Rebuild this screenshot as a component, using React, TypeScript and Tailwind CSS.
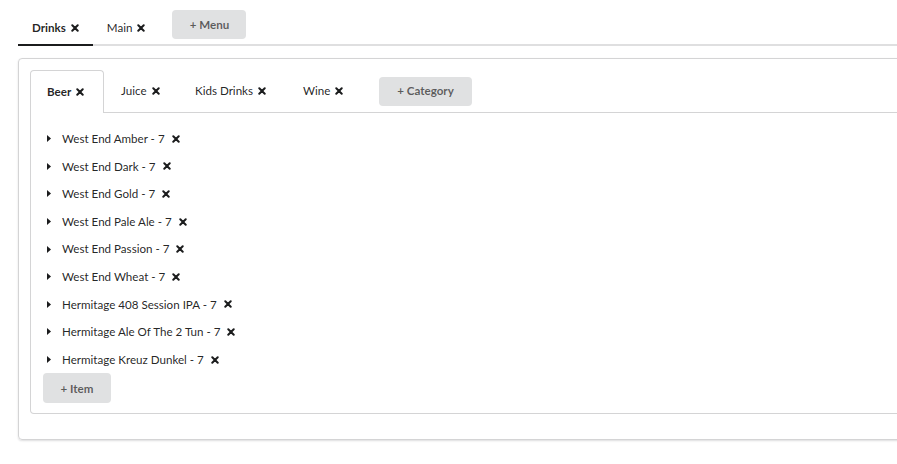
import React from "react";

function XIcon({ className = "" }: { className?: string }) {
  return (
    <svg viewBox="0 0 10 10" className={`w-[8px] h-[8px] ${className}`} aria-hidden>
      <path d="M1.6 1.6 L8.4 8.4 M8.4 1.6 L1.6 8.4" stroke="#1b1c1d" strokeWidth="2.5" strokeLinecap="round" fill="none" />
    </svg>
  );
}

function Caret() {
  return (
    <svg viewBox="0 0 4 7" className="w-[4px] h-[7px]" aria-hidden>
      <polygon points="0,0 4,3.5 0,7" fill="#1b1c1d" />
    </svg>
  );
}

const items = [
  "West End Amber - 7",
  "West End Dark - 7",
  "West End Gold - 7",
  "West End Pale Ale - 7",
  "West End Passion - 7",
  "West End Wheat - 7",
  "Hermitage 408 Session IPA - 7",
  "Hermitage Ale Of The 2 Tun - 7",
  "Hermitage Kreuz Dunkel - 7",
];

export default function App() {
  return (
    <div
      className="w-[897px] h-[464px] overflow-hidden bg-white text-[11.6px] text-[rgba(0,0,0,0.87)]"
      style={{ fontFamily: "Lato, 'Open Sans', sans-serif" }}
    >
      <div className="w-[1000px] ml-[18px]">
        {/* top menu */}
        <div className="mt-[10px] h-[36px] flex border-b-2 border-[#dfdfe0]">
          <div className="flex items-center pt-[2px] px-[14px] border-b-2 border-[#1b1c1d] -mb-[2px] font-bold leading-none">
            <span>Drinks</span>
            <XIcon className="ml-[5px]" />
          </div>
          <div className="flex items-center pt-[2px] px-[14px] leading-none">
            <span>Main</span>
            <XIcon className="ml-[5px]" />
          </div>
          <button className="self-start ml-[13px] h-[29px] w-[74px] rounded-[4px] bg-[#e0e1e2] text-[rgba(0,0,0,0.6)] font-bold leading-none">
            + Menu
          </button>
        </div>

        {/* outer segment */}
        <div className="mt-[12px] border border-[#d4d4d5] rounded-[4px] shadow-[0_1px_2px_0_rgba(34,36,38,0.15)] pt-[11px] px-[11px] pb-[25px]">
          {/* tabular menu */}
          <div className="h-[43px] flex items-center border-b border-[#d4d4d5]">
            <div className="self-stretch flex items-center pl-[16px] bg-white border border-[#d4d4d5] border-b-0 rounded-t-[4px] -mb-[1px] font-bold leading-none w-[74px]">
              <span>Beer</span>
              <XIcon className="ml-[5px]" />
            </div>
            <div className="self-stretch flex items-center pl-[17px] w-[74px] leading-none">
              <span>Juice</span>
              <XIcon className="ml-[5px]" />
            </div>
            <div className="self-stretch flex items-center pl-[17px] w-[108px] leading-none">
              <span>Kids Drinks</span>
              <XIcon className="ml-[5px]" />
            </div>
            <div className="self-stretch flex items-center pl-[17px] w-[75px] leading-none">
              <span>Wine</span>
              <XIcon className="ml-[5px]" />
            </div>
            <button className="ml-[18px] h-[29px] w-[93px] rounded-[4px] bg-[#e0e1e2] text-[rgba(0,0,0,0.6)] font-bold leading-none">
              + Category
            </button>
          </div>

          {/* tab segment */}
          <div className="border border-t-0 border-[#d4d4d5] rounded-b-[4px] pt-[12px] pb-[10px] pl-[12px]">
            {items.map((it) => (
              <div key={it} className="h-[27.6px] flex items-center pl-[4px]">
                <Caret />
                <span className="ml-[11px] leading-none">{it}</span>
                <XIcon className="ml-[7px]" />
              </div>
            ))}
            <button className="h-[30px] w-[68px] rounded-[4px] bg-[#e0e1e2] text-[rgba(0,0,0,0.6)] font-bold leading-none">
              + Item
            </button>
          </div>
        </div>
      </div>
    </div>
  );
}
